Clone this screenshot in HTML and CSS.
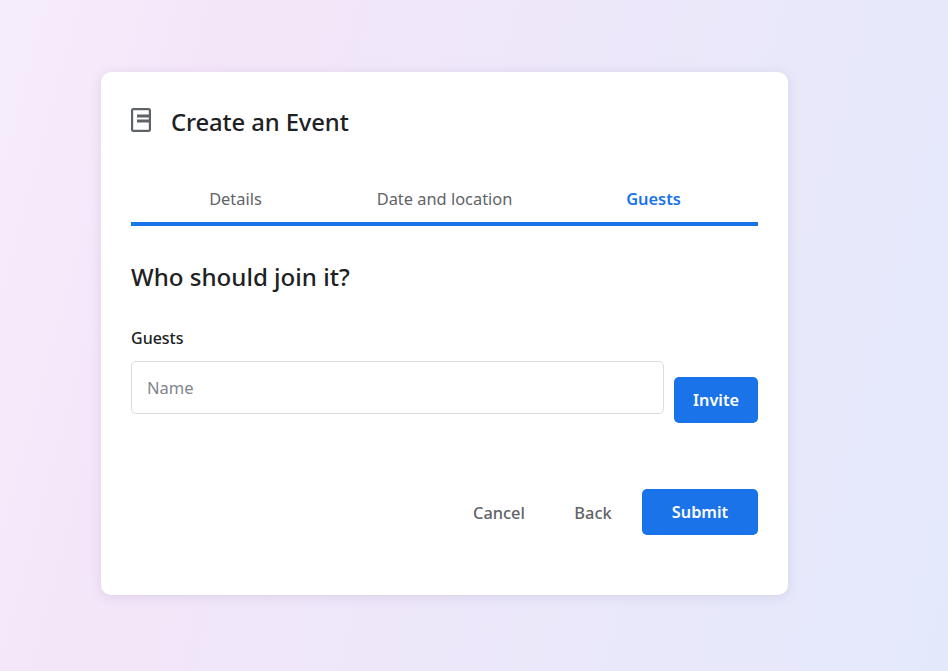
FILE: index.html
```html
<!DOCTYPE html>
<html lang="en">
<head>
<meta charset="utf-8">
<title>Create an Event</title>
<link rel="stylesheet" href="styles.css">
</head>
<body>
<main class="card">
  <header class="head">
    <svg class="head-icon" width="20" height="24" viewBox="0 0 20 24" fill="none" stroke="#5f6368"><rect x="1.1" y="1.1" width="17.8" height="21.8" rx="1.2" stroke-width="2.2"/><path d="M6 8h13M6 13h13" stroke-width="2.8"/></svg>
    <h1 class="title">Create an Event</h1>
  </header>
  <nav class="tabs">
    <a class="tab">Details</a>
    <a class="tab">Date and location</a>
    <a class="tab tab-active">Guests</a>
  </nav>
  <h2 class="subtitle">Who should join it?</h2>
  <label class="label" for="guest">Guests</label>
  <div class="invite-row">
    <input class="input" id="guest" placeholder="Name">
    <button class="btn btn-primary btn-invite">Invite</button>
  </div>
  <footer class="actions">
    <button class="btn btn-text btn-cancel">Cancel</button>
    <button class="btn btn-text btn-back">Back</button>
    <button class="btn btn-primary btn-submit">Submit</button>
  </footer>
</main>
</body>
</html>
```
FILE: styles.css
```css
* { box-sizing: border-box; }
html, body { height: 100%; }
body {
  margin: 0;
  padding: 72px 0 0 101px;
  overflow: hidden;
  background: linear-gradient(105deg, #f6edfb 0%, #f4e6f9 20%, #e3e9fb 100%);
  font-family: "Noto Sans", "Open Sans", sans-serif;
  color: #202124;
}
.card {
  width: 687px;
  height: 523px;
  padding: 30px;
  background: #fff;
  border-radius: 10px;
  box-shadow: 0 2px 12px rgba(90, 80, 140, 0.14);
}
.head { display: flex; align-items: center; gap: 20px; height: 40px; }
.head-icon { flex: none; margin-top: -4px; }
.title { margin: -1px 0 0; font-size: 23.8px; font-weight: 500; letter-spacing: -0.1px; }
.tabs {
  display: flex;
  justify-content: space-between;
  margin-top: 28px;
  height: 56px;
  border-bottom: 4px solid #1a73e8;
}
.tab {
  width: 33.33%;
  padding-top: 17px;
  text-align: center;
  font-size: 16.4px;
  line-height: 24px;
  color: #5f6368;
}
.tab-active { color: #1a73e8; font-weight: 600; }
.subtitle { margin: 34px 0 0; font-size: 24.1px; line-height: 34px; font-weight: 500; }
.label { display: block; margin-top: 32px; font-size: 16px; line-height: 24px; font-weight: 500; }
.invite-row { display: flex; align-items: flex-end; gap: 10px; margin-top: 11px; }
.input {
  flex: 1;
  height: 53px;
  margin-bottom: 9px;
  padding: 0 15px;
  border: 1px solid #dadce0;
  border-radius: 5px;
  font: inherit;
  font-size: 16.5px;
  outline: none;
}
.input::placeholder { color: #80868b; opacity: 1; }
.btn {
  height: 46px;
  border: 0;
  border-radius: 5px;
  font: inherit;
  font-size: 16.3px;
  font-weight: 600;
}
.btn-primary { background: #1a73e8; color: #fff; }
.btn-text { background: transparent; color: #5f6368; font-size: 16.4px; font-weight: 500; }
.btn-invite { width: 84px; margin-top: 16px; }
.actions { display: flex; justify-content: flex-end; align-items: center; margin-top: 66px; }
.btn-cancel { width: 84px; }
.btn-back { width: 78px; margin-left: 13px; }
.btn-submit { width: 116px; margin-left: 10px; }
```
